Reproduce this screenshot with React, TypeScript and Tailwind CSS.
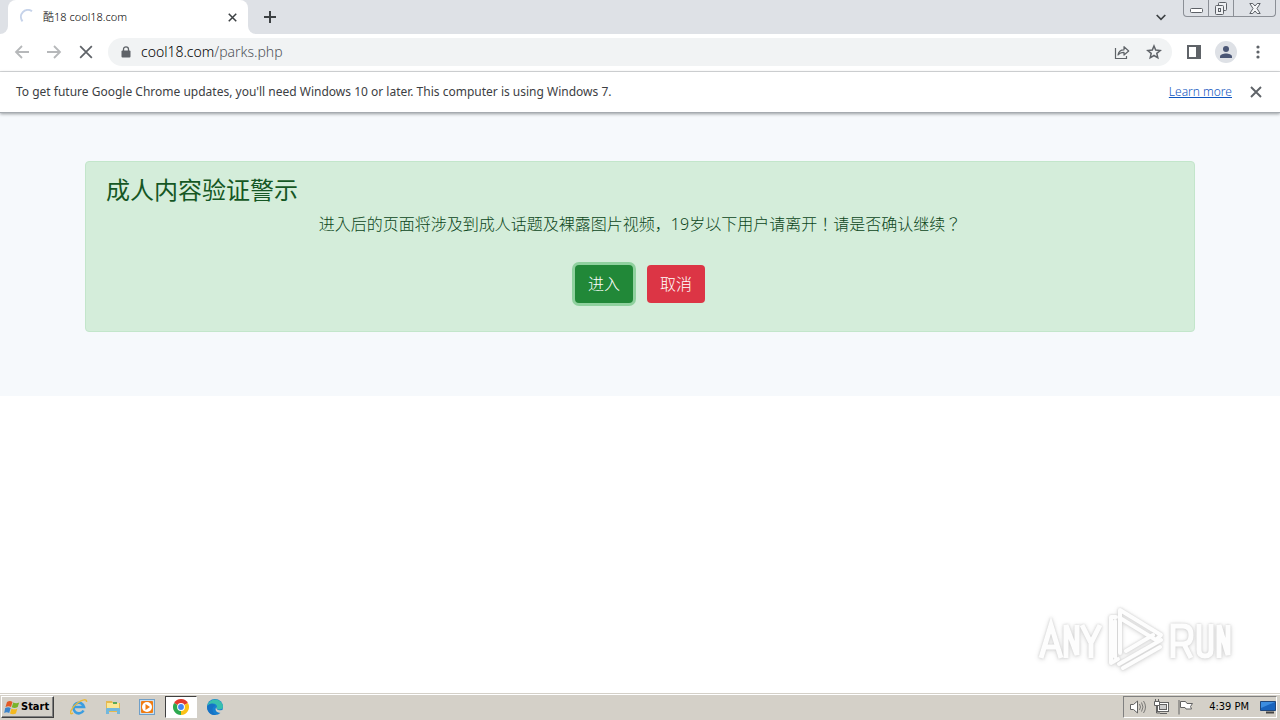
import type { ReactNode } from "react";

const uiFont = "font-['Noto_Sans','Noto_Sans_CJK_SC',sans-serif]";

function IconButton({ label, className = "", children }: { label: string; className?: string; children: ReactNode }) {
  return (
    <button type="button" aria-label={label} className={`flex shrink-0 items-center justify-center ${className}`}>
      {children}
    </button>
  );
}

function CrossIcon({ size, width = 2 }: { size: number; width?: number }) {
  return (
    <svg width={size} height={size} viewBox="0 0 12 12" fill="none" stroke="currentColor" strokeWidth={width}>
      <path d="M1 1l10 10M11 1L1 11" />
    </svg>
  );
}

function TabStrip() {
  return (
    <header className="flex h-[34px] items-start bg-[#dee1e6]">
      <div className="h-[34px] w-2 shrink-0 bg-white">
        <div className="h-full rounded-br-lg bg-[#dee1e6]" />
      </div>
      <div className="flex h-[34px] w-60 shrink-0 items-center rounded-t-lg bg-white pl-3 pr-2">
        <svg width="16" height="16" viewBox="0 0 16 16" fill="none" stroke="#c6d3ea" strokeWidth="2">
          <path d="M12 2.200A7 7 0 0 0 2.500 12.300" />
        </svg>
        <span className="ml-[7px] grow whitespace-nowrap text-[11px] font-light text-black">酷18 cool18.com</span>
        <IconButton label="Close tab" className="size-4 text-[#3c4043]">
          <CrossIcon size={9} />
        </IconButton>
      </div>
      <div className="h-[34px] w-2 shrink-0 bg-white">
        <div className="h-full rounded-bl-lg bg-[#dee1e6]" />
      </div>
      <IconButton label="New tab" className="h-[34px] w-7 text-[#3c4043]">
        <svg width="12" height="12" viewBox="0 0 12 12" stroke="currentColor" strokeWidth="2">
          <path d="M6 0v12M0 6h12" />
        </svg>
      </IconButton>
      <div className="grow" />
      <IconButton label="Search tabs" className="mr-3 h-[34px] w-5 text-[#3c4043]">
        <svg width="10" height="7" viewBox="0 0 10 7" fill="none" stroke="currentColor" strokeWidth="1.700">
          <path d="M.7 1L5 5.300 9.300 1" />
        </svg>
      </IconButton>
      <div className="mr-1 flex h-[17px] divide-x divide-[#8b8f96] rounded-b border border-t-0 border-[#8b8f96] text-[#5d6167]">
        <IconButton label="Minimize" className="w-[25px] pt-1">
          <svg width="13" height="5" viewBox="0 0 13 5" fill="#fff" stroke="currentColor">
            <rect x=".5" y=".5" width="12" height="4" rx="1" />
          </svg>
        </IconButton>
        <IconButton label="Restore" className="w-[25px]">
          <svg width="14" height="13" viewBox="0 0 14 13" fill="#eef0f3" stroke="currentColor">
            <rect x="4.500" y=".5" width="8" height="8" rx="1" />
            <rect x="1.500" y="3.500" width="8" height="9" rx="1" />
            <rect x="4.500" y="6.500" width="2" height="3" />
          </svg>
        </IconButton>
        <IconButton label="Close window" className="w-[41px]">
          <svg width="12" height="11" viewBox="0 0 12 11" fill="#f4f5f7" stroke="currentColor">
            <path d="M.8.5h3L6 3 8.200.5h3L8 5.500l3.200 5h-3L6 8l-2.200 2.500h-3L4 5.500z" />
          </svg>
        </IconButton>
      </div>
    </header>
  );
}

function Toolbar() {
  return (
    <nav className="flex h-[38px] items-center border-b border-[#d9dbdd] bg-white pb-px text-[#5f6368]">
      <IconButton label="Back" className="ml-2 size-7 text-[#b6b8ba]">
        <svg width="16" height="14" viewBox="0 0 16 14" fill="none" stroke="currentColor" strokeWidth="1.800">
          <path d="M15 7H2M8 1L2 7l6 6" />
        </svg>
      </IconButton>
      <IconButton label="Forward" className="ml-1 size-7 text-[#b6b8ba]">
        <svg width="16" height="14" viewBox="0 0 16 14" fill="none" stroke="currentColor" strokeWidth="1.800">
          <path d="M1 7h13M8 1l6 6-6 6" />
        </svg>
      </IconButton>
      <IconButton label="Stop loading" className="ml-1 size-7">
        <CrossIcon size={14} width={1.500} />
      </IconButton>
      <div className="ml-2 flex h-7 grow items-center rounded-full bg-[#f1f3f4] pl-3">
        <svg width="10" height="13" viewBox="0 0 10 13" className="mx-px shrink-0">
          <path d="M2.500 5V3.300a2.500 2.500 0 0 1 5 0V5" fill="none" stroke="#5f6368" strokeWidth="1.300" />
          <rect x=".5" y="4.500" width="9" height="7" rx="1" fill="#5f6368" />
        </svg>
        <a href="#url" className="ml-[9px] grow whitespace-nowrap text-sm font-light text-[#50545a]">
          <span className="text-black">cool18.com</span>/parks.php
        </a>
        <IconButton label="Share this page" className="size-8">
          <svg width="16" height="15" viewBox="0 0 16 15" fill="none" stroke="currentColor" strokeWidth="1.200">
            <path d="M1.500 3v10.500h11V11" />
            <path d="M4 10c.5-3.500 2.500-5.200 6-5.200V1.700L14.700 6 10 10V7.300C7.200 7.300 5.500 8 4 10z" strokeLinejoin="round" />
          </svg>
        </IconButton>
        <IconButton label="Bookmark this tab" className="mr-[2px] size-8">
          <svg width="16" height="16" viewBox="0 0 16 16" fill="none" stroke="currentColor" strokeWidth="1.500">
            <path d="M8 2l1.700 4.100 4.500.4-3.400 2.900 1 4.400L8 11.500l-3.800 2.300 1-4.400-3.400-2.900 4.500-.4z" />
          </svg>
        </IconButton>
      </div>
      <IconButton label="Side panel" className="ml-2 size-7">
        <svg width="14" height="14" viewBox="0 0 14 14">
          <rect x="1" y="1" width="12" height="12" fill="none" stroke="currentColor" strokeWidth="2" />
          <rect x="9" y="1" width="4" height="12" fill="currentColor" />
        </svg>
      </IconButton>
      <IconButton label="Profile" className="ml-[7px] size-[22px] rounded-full bg-[#dee1e6] text-[#4a5675]">
        <svg width="12" height="12" viewBox="0 0 12 12" fill="currentColor">
          <circle cx="6" cy="3" r="3" />
          <path d="M0 12v-1.500C0 8.500 3.500 7.500 6 7.500s6 1 6 3V12z" />
        </svg>
      </IconButton>
      <IconButton label="Menu" className="ml-[7px] mr-2 size-7">
        <svg width="4" height="14" viewBox="0 0 4 14" fill="currentColor">
          <circle cx="2" cy="2" r="1.600" />
          <circle cx="2" cy="7" r="1.600" />
          <circle cx="2" cy="12" r="1.600" />
        </svg>
      </IconButton>
    </nav>
  );
}

function InfoBar() {
  return (
    <div className="relative z-10 flex h-[41px] items-center border-b border-[#a6abb0] bg-white pl-4 pr-[18px] text-xs text-[#3c4043] shadow-[0_1px_3px_rgba(60,64,67,0.5)]">
      <p className="grow">
        To get future Google Chrome updates, you'll need Windows 10 or later. This computer is using Windows 7.
      </p>
      <a href="#learn" className="font-light text-[#0f56c0] underline">Learn more</a>
      <IconButton label="Dismiss" className="ml-[18px] text-[#5f6368]">
        <CrossIcon size={12} width={1.900} />
      </IconButton>
    </div>
  );
}

function Verification() {
  return (
    <section className="bg-[#f6f9fc] px-[85px] pb-16 pt-12">
      <div role="alert" className="rounded border border-[#c3e6cb] bg-[#d4edda] px-5 pb-7 pt-3 text-[#155724]">
        <h1 className="mb-1.5 text-2xl leading-8">成人内容验证警示</h1>
        <p className="text-center font-['Noto_Sans','Noto_Sans_CJK_JP',sans-serif] text-base font-light leading-6 text-[#0b4519]">
          进入后的页面将涉及到成人话题及裸露图片视频，19岁以下用户请离开！请是否确认继续？
        </p>
        <div className="mt-[29px] flex justify-center gap-[14px] text-base font-light text-white">
          <button type="button" className="h-[38px] rounded bg-[#218838] px-[13px] ring-3 ring-[#8fd19e]">进入</button>
          <button type="button" className="h-[38px] rounded bg-[#dc3545] px-[13px]">取消</button>
        </div>
      </div>
    </section>
  );
}

function Watermark() {
  return (
    <div className="absolute bottom-5 right-12 text-[#fdfdfd] [filter:drop-shadow(0_0_1px_#d0d0d0)_drop-shadow(0_1px_2px_#dedede)]">
      <svg width="196" height="70" viewBox="0 0 196 70" fill="none" stroke="currentColor">
        <g strokeWidth="5">
          <path d="M5 55L15 22l10 33M9 44h12M30 55V22l11 30V22M46 22l9 18 9-18M55 39v16" />
          <path d="M137 55V23h10q8 0 8 9t-8 9h-10M148 41l7 14M163 21v26q0 6 6 6t6-6V21M183 55V22l9 30V22" />
        </g>
        <g strokeWidth="4" strokeLinejoin="round" strokeLinecap="round">
          <path d="M84 50V7l41 25-5 5-36-22" />
          <path d="M80 14h-5v46l7-4M79 18v36" />
          <path d="M83 61l42-24M87 65l37-21M90 48l27-16" />
        </g>
      </svg>
    </div>
  );
}

function Taskbar() {
  const task = "flex h-[22px] w-8 items-center justify-center";
  return (
    <footer className="flex h-[27px] items-center border-t border-[#d4d0c8] bg-[#d4d0c8] pb-px pl-px pr-[3px] pt-px shadow-[inset_0_1px_0_#fff]">
      <button type="button" className="flex h-[22px] w-[53px] items-center gap-px border border-b-[#404040] border-l-white border-r-[#404040] border-t-white pl-[2px] font-['DejaVu_Sans_Condensed','DejaVu_Sans',sans-serif] text-[11px] font-bold text-black shadow-[inset_-1px_-1px_0_#808080]">
        <svg width="16" height="15" viewBox="0 0 16 15" className="shrink-0">
          <path d="M3 2q3-2 5.500 0L7 7Q4.500 5.300 1.500 7z" fill="#e35a26" />
          <path d="M9.200 2.400q3 1.600 6 0L13.700 7q-3 1.800-5.900.3z" fill="#79b42b" />
          <path d="M1.200 8q3-1.700 5.500 0l-1.500 5q-2.500-1.700-5 0z" fill="#3c84cb" />
          <path d="M7.500 8.400q3 1.700 5.900 0l-1.500 5q-3 1.600-5.900 0z" fill="#f4b91f" />
        </svg>
        Start
      </button>
      <button type="button" aria-label="Internet Explorer" className={`ml-[9px] ${task}`}>
        <svg width="18" height="18" viewBox="0 0 18 18" fill="none">
          <path d="M13.500 12.500A5.300 5.300 0 1 1 14 9H4.500" stroke="#3b9de0" strokeWidth="2.600" />
          <path d="M3 15C-2 18 1 9.500 7.500 5 12 1.500 17 .5 16.500 4" stroke="#e9b93c" strokeWidth="1.500" />
        </svg>
      </button>
      <button type="button" aria-label="File Explorer" className={`ml-[2px] ${task}`}>
        <svg width="16" height="16" viewBox="0 0 16 16">
          <path d="M1 2h6l1 2h7v9H1z" fill="#e5b94f" />
          <path d="M2 4h12v5H2z" fill="#fbe795" />
          <path d="M8 3h4v2H8z" fill="#5aa95a" />
          <path d="M1 15V10q0-1 1-1h12q1 0 1 1v5h-3v-3H4v3z" fill="#72b8dd" />
        </svg>
      </button>
      <button type="button" aria-label="Media Player" className={`ml-[2px] ${task}`}>
        <svg width="16" height="16" viewBox="0 0 16 16">
          <rect x=".5" y=".5" width="15" height="15" fill="#c9dff1" stroke="#6f9fc8" />
          <rect x="2" y="2" width="12" height="12" rx="1" fill="#f07c12" />
          <circle cx="8" cy="8" r="5" fill="#fff" />
          <path d="M6.500 5v6L11 8z" fill="#f07c12" />
        </svg>
      </button>
      <button type="button" aria-label="Google Chrome" className={`ml-[2px] border border-b-white border-l-[#404040] border-r-white border-t-[#404040] bg-white ${task}`}>
        <svg width="16" height="16" viewBox="0 0 16 16">
          <path d="M8 8L1.070 4A8 8 0 0 1 14.930 4z" fill="#e33b2e" />
          <path d="M8 8l6.930-4A8 8 0 0 1 8 16z" fill="#fbc116" />
          <path d="M8 8v8A8 8 0 0 1 1.070 4z" fill="#2da94f" />
          <circle cx="8" cy="8" r="3.900" fill="#fff" />
          <circle cx="8" cy="8" r="2.900" fill="#4285f4" />
        </svg>
      </button>
      <button type="button" aria-label="Microsoft Edge" className={`ml-[2px] ${task}`}>
        <svg width="16" height="16" viewBox="0 0 16 16">
          <circle cx="8" cy="8" r="8" fill="#167fd0" />
          <path d="M.2 7A8 8 0 0 1 16 7.500c0 2-1.500 3-3.500 3-3 0-3-1-2.500-2C10.500 4 4 3 .2 7z" fill="#38bfae" />
          <path d="M.2 7C4 3 8 5 8 7c-4 1-3 7 1 9C3 16.500-.5 12 .2 7z" fill="#1672c4" />
          <path d="M9.500 8c-1 2 2 4 5.500 3q1-.5 1 1l-2 2c-4 0-7-3-4.500-6z" fill="#d4d0c8" />
        </svg>
      </button>
      <div className="grow" />
      <div className="flex h-[22px] items-center border border-b-white border-l-[#808080] border-r-white border-t-[#808080] pl-[5px] text-[#626262]">
        <svg width="18" height="16" viewBox="0 0 18 16" fill="none" stroke="currentColor">
          <path d="M1.500 5.500h3L8.500 2v12l-4-3.500h-3z" fill="#fff" />
          <path d="M10.500 5q2 3 0 6M12.500 3.500q3 4.500 0 9M14.500 2q4 6 0 12" strokeWidth=".8" />
        </svg>
        <svg width="18" height="16" viewBox="0 0 18 16" fill="#fff" stroke="currentColor" className="ml-[6px]">
          <rect x="4.500" y="3.500" width="11" height="9" />
          <rect x="6.500" y="5.500" width="7" height="5" fill="#ccc" />
          <path d="M7 14.500h7M3.500 7v7H7" fill="none" />
          <path d="M1.500 2.500h5v4h-5zM2.500 0v2M5.500 0v2" />
        </svg>
        <svg width="18" height="16" viewBox="0 0 18 16" fill="#fff" stroke="currentColor" className="ml-[6px]">
          <path d="M3.500 2.500h5l1.500 2h5.500l-2 3 1 2.500H9L8 8.500H3.500z" />
          <path d="M2 1v14.500" />
        </svg>
        <time className="ml-[14px] whitespace-nowrap font-['DejaVu_Sans_Condensed','DejaVu_Sans',sans-serif] text-[11px] text-black">4:39 PM</time>
        <svg width="16" height="14" viewBox="0 0 16 14" className="ml-[11px]">
          <path d="M.5 1.500h15v9H.5z" fill="#1863bd" stroke="#20477b" />
          <path d="M1 2h14L1 8z" fill="#3c8de0" />
          <path d="M6 12.500h8" stroke="#444" strokeWidth="2" />
        </svg>
      </div>
    </footer>
  );
}

export default function App() {
  return (
    <div className={`flex min-h-screen flex-col bg-white ${uiFont}`}>
      <TabStrip />
      <Toolbar />
      <InfoBar />
      <main className="relative grow">
        <Verification />
        <Watermark />
      </main>
      <Taskbar />
    </div>
  );
}
